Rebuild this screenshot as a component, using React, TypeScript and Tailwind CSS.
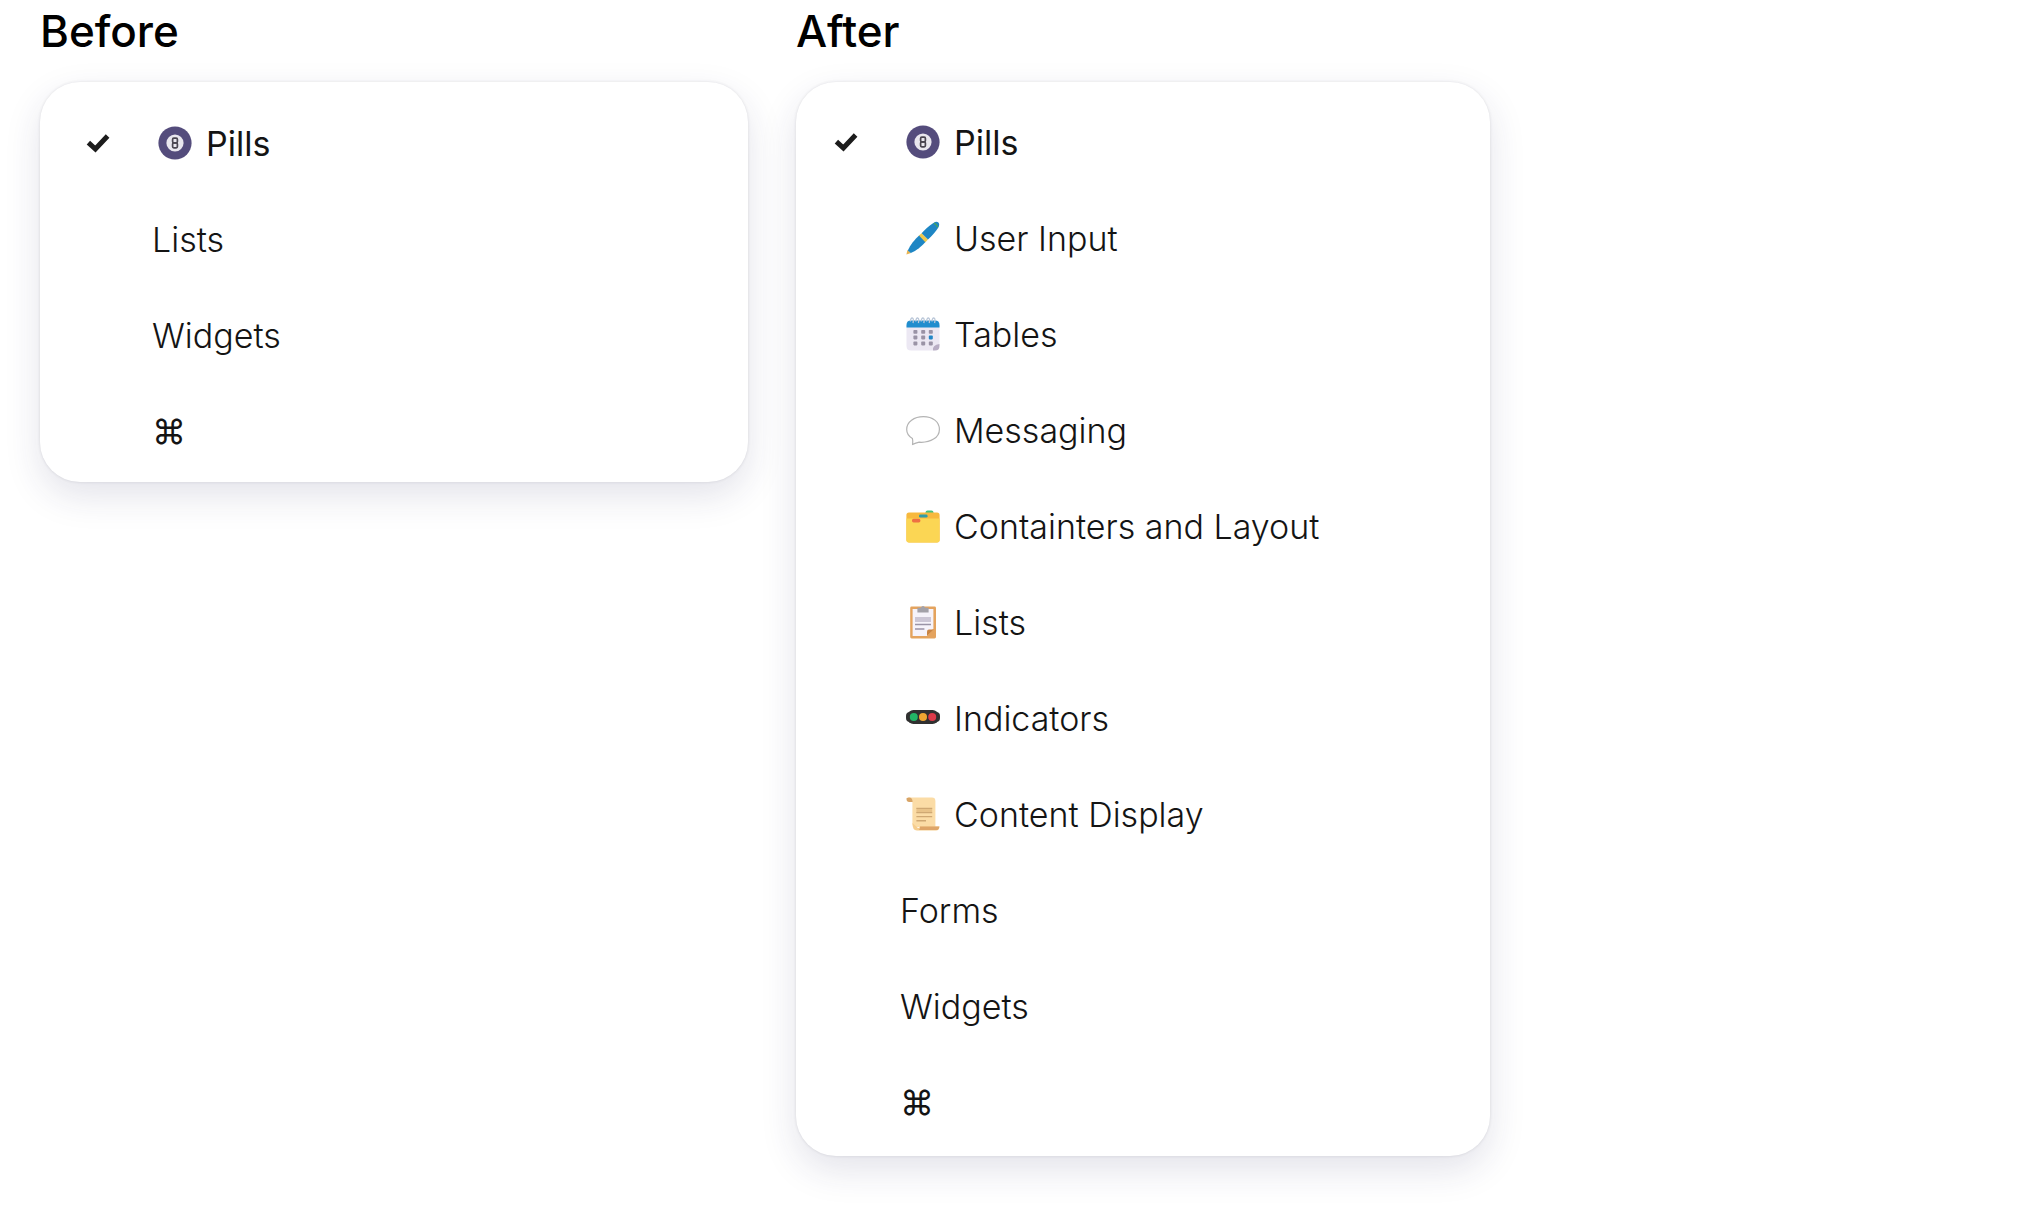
import { useState, type ReactNode } from 'react'
import clsx from 'clsx'

interface MenuItem {
  label: string
  icon?: ReactNode
}

interface Props {
  title: string
  items: MenuItem[]
  className: string
  itemClassName: string
}

const iconClass = 'ml-1.5 mr-3.5 size-[34px] shrink-0'

function CheckMark() {
  return (
    <svg viewBox="0 0 24 20" className="h-5 w-6" fill="none" aria-hidden="true">
      <path d="M2.4 9.6L9.4 16L21.6 3" stroke="#1c1c1c" strokeWidth="5" />
    </svg>
  )
}

function PillIcon() {
  return (
    <svg viewBox="0 0 34 34" className={iconClass} aria-hidden="true">
      <circle cx="17" cy="17" r="16.6" fill="#544c7c" />
      <circle cx="17" cy="17" r="8.6" fill="#e9e7ee" />
      <rect x="14.6" y="12.2" width="4.8" height="4.6" rx="1.2" fill="none" stroke="#4a4650" strokeWidth="1.7" />
      <rect x="14.6" y="16.8" width="4.8" height="5" rx="1.2" fill="none" stroke="#4a4650" strokeWidth="1.7" />
    </svg>
  )
}

function PenIcon() {
  return (
    <svg viewBox="0 0 34 34" className={iconClass} aria-hidden="true">
      <path d="M0.4 33.6L1.4 29L5 32Z" fill="#e8b350" />
      <path d="M1.8 29.4C4.4 23.6 8.6 18.4 13.6 14L20 20.4C15.6 25.4 10.4 29.4 4.8 32Z" fill="#1e86c4" />
      <path d="M13 14.6L15.6 12.2L22 18.6L19.4 21.2Z" fill="#f0c94c" />
      <path d="M15.6 12.2C19 8.6 23 4.8 27.4 2C29.4 0.6 31.2 0.4 32.4 1.6C33.6 2.8 33.4 4.6 32.2 6.8C29.6 11 26 14.8 22 18.6Z" fill="#1e86c4" />
      <path d="M28 2.2C29.8 3.2 31 4.4 31.8 6.2" stroke="#47a35f" strokeWidth="1.5" fill="none" />
    </svg>
  )
}

function CalendarIcon() {
  return (
    <svg viewBox="0 0 34 34" className={iconClass} aria-hidden="true">
      <path d="M0.5 8H33.5V27L27 33.5H5Q0.5 33.5 0.5 29Z" fill="#ece8f3" />
      <path d="M33.5 27V29Q33.5 33.5 29 33.5H27Q26 28 33.5 27Z" fill="#b8adc4" />
      <path d="M0.5 10.5V8Q0.5 3.6 5 3.6H29Q33.5 3.6 33.5 8V10.5Z" fill="#1f8dce" />
      {[6, 11.4, 16.8, 22.2, 27.6].map(x => (
        <path
          key={x}
          d={`M${x - 1.6} 4.5Q${x - 1.4} 0.8 ${x + 0.4} 1Q${x + 2} 1.5 ${x + 1} 6`}
          fill="none"
          stroke="#b9c6d8"
          strokeWidth="1.3"
        />
      ))}
      {[13, 18.6, 24.6].map(y =>
        [7.4, 15.2, 22.8].map(x => (
          <rect
            key={`${x}-${y}`}
            x={x}
            y={y}
            width="4"
            height="3.8"
            rx="0.8"
            fill={x === 22.8 && y === 18.6 ? '#2186c6' : '#9a93a6'}
          />
        )),
      )}
    </svg>
  )
}

function SpeechIcon() {
  return (
    <svg viewBox="0 0 34 34" className={iconClass} aria-hidden="true">
      <path
        d="M17.5 3.6C8 3.6 0.7 8.8 0.7 16.4C0.7 20.6 3 23.4 6.4 25.4C6.9 27.4 6.9 29.2 6.6 31.4C8.6 30.6 11 29.8 13.2 29.2C24.6 30 33.4 24.4 33.4 16.4C33.4 8.8 26.6 3.6 17.5 3.6Z"
        fill="#fff"
        stroke="#b4b4b4"
        strokeWidth="1.2"
      />
    </svg>
  )
}

function FolderIcon() {
  return (
    <svg viewBox="0 0 34 34" className={iconClass} aria-hidden="true">
      <rect x="19.5" y="1.4" width="8" height="6" rx="2" fill="#45c07c" />
      <rect x="0.4" y="3.4" width="33.2" height="30" rx="2.6" fill="#f7b93e" />
      <rect x="13" y="5.6" width="8.6" height="3" rx="1.4" fill="#2f9ca8" />
      <path d="M0.4 9.4H33.6V31Q33.6 33.4 31 33.4H3Q0.4 33.4 0.4 31Z" fill="#fbd654" />
      <rect x="6" y="9.8" width="8.4" height="3.6" rx="1.6" fill="#ee7043" />
    </svg>
  )
}

function ClipboardIcon() {
  return (
    <svg viewBox="0 0 34 34" className={iconClass} aria-hidden="true">
      <rect x="4.2" y="1.6" width="25.8" height="31.8" rx="1.4" fill="#e4a35e" />
      <path d="M6.6 4H27.4V23.6L21 31H6.6Z" fill="#f6f3fa" />
      <path d="M21 31V26.4Q21 24.6 23 24.6H27.4Z" fill="#c98443" />
      <path d="M11.4 7.4V2.8H14.6Q17 -0.8 19.4 2.8H22.6V7.4Z" fill="#a3a1a8" />
      <rect x="9" y="12" width="16" height="5" fill="#ccc6d5" />
      <path d="M9 19.6H25M9 24H18.4" stroke="#9a93a6" strokeWidth="1.5" />
    </svg>
  )
}

function TrafficLightIcon() {
  return (
    <svg viewBox="0 0 34 34" className={iconClass} aria-hidden="true">
      <rect x="0" y="11" width="34" height="10" rx="4" fill="#333" />
      <rect x="1.4" y="9" width="31.2" height="14" rx="6" fill="#303030" />
      <circle cx="7.8" cy="16" r="4" fill="#22b566" />
      <circle cx="17" cy="16" r="4" fill="#efa632" />
      <circle cx="26.2" cy="16" r="4" fill="#dd3a4a" />
    </svg>
  )
}

function ScrollIcon() {
  return (
    <svg viewBox="0 0 34 34" className={iconClass} aria-hidden="true">
      <path d="M2 0.6H26Q29.4 0.6 29.4 4V30H11Q6.4 30 6.4 26V5Z" fill="#fbdca6" />
      <path d="M0.6 1Q0 5 3.4 5H6.6Q6.4 0.6 3 0.6Z" fill="#d8a466" />
      <path d="M6.4 26Q6.4 33.6 11 33.6H30Q33.4 33.6 33.4 29.6H14Q14 31 12 31Z" fill="#f6cd8e" />
      <path d="M14 29.4H33.4Q33 33 30 33H12.6Q14.4 32 14 29.4Z" fill="#dea568" />
      <rect x="10.4" y="11" width="15.8" height="5" fill="#e8c288" />
      <path d="M10.4 11.4H26.2M10.4 15.6H26.2M10.4 19.6H26.2M10.4 23.8H20" stroke="#cfa873" strokeWidth="1.4" />
    </svg>
  )
}

const beforeItems: MenuItem[] = [
  { label: 'Pills', icon: <PillIcon /> },
  { label: 'Lists' },
  { label: 'Widgets' },
  { label: '⌘' },
]

const afterItems: MenuItem[] = [
  { label: 'Pills', icon: <PillIcon /> },
  { label: 'User Input', icon: <PenIcon /> },
  { label: 'Tables', icon: <CalendarIcon /> },
  { label: 'Messaging', icon: <SpeechIcon /> },
  { label: 'Containters and Layout', icon: <FolderIcon /> },
  { label: 'Lists', icon: <ClipboardIcon /> },
  { label: 'Indicators', icon: <TrafficLightIcon /> },
  { label: 'Content Display', icon: <ScrollIcon /> },
  { label: 'Forms' },
  { label: 'Widgets' },
  { label: '⌘' },
]

function Menu({ title, items, className, itemClassName }: Props) {
  const [selected, setSelected] = useState(0)

  return (
    <section>
      <h2 className="text-[44px] leading-[62px] font-medium text-black">{title}</h2>
      <ul
        role="menu"
        aria-label={title}
        className={clsx(
          'mt-5 rounded-[40px] bg-white shadow-[0_14px_36px_rgba(40,40,90,0.13),0_0_3px_rgba(40,40,60,0.14)]',
          className,
        )}
      >
        {items.map((item, idx) => (
          <li key={item.label} role="none">
            <button
              type="button"
              role="menuitemradio"
              aria-checked={idx === selected}
              onClick={() => setSelected(idx)}
              className={clsx(
                'flex h-24 w-full cursor-pointer items-center gap-[42px] text-left text-[34px] text-[#141414]',
                idx === selected || item.label === '⌘' ? 'font-normal' : 'font-light',
                itemClassName,
              )}
            >
              <span className="w-6 shrink-0">{idx === selected && <CheckMark />}</span>
              <span className="flex items-center whitespace-nowrap">
                {item.icon}
                {item.label}
              </span>
            </button>
          </li>
        ))}
      </ul>
    </section>
  )
}

export default function App() {
  return (
    <main className="grid min-h-screen grid-cols-[708fr_694fr_482fr] items-start gap-x-12 bg-white pl-10 font-['Inter',sans-serif]">
      <Menu title="Before" items={beforeItems} className="pt-[13px] pb-[3px]" itemClassName="pl-[46px]" />
      <Menu title="After" items={afterItems} className="pt-[12px] pb-[6px]" itemClassName="pl-[38px]" />
    </main>
  )
}
